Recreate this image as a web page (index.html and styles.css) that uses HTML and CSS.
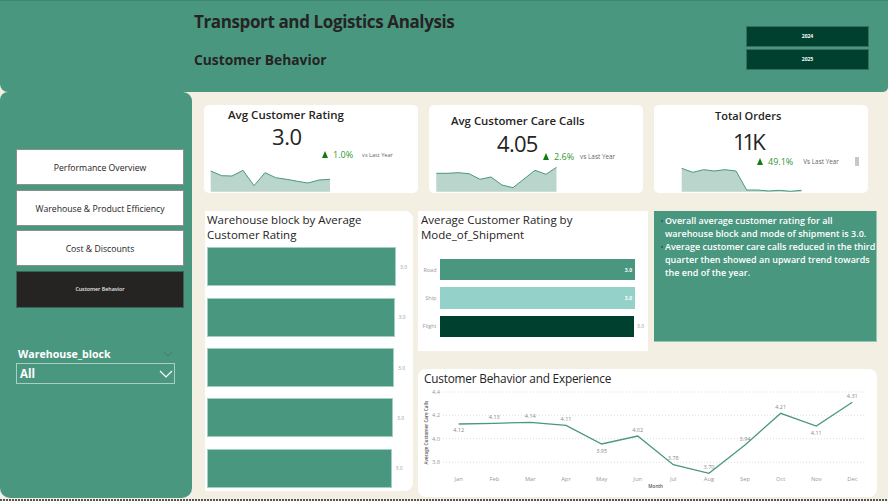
FILE: index.html
```html
<!DOCTYPE html>
<html lang="en">

<head>
    <meta charset="UTF-8">
    <title>Transport and Logistics Analysis</title>
    <link rel="stylesheet" href="styles.css">
</head>

<body>
    <div class="header">
        <div class="titles">
            <h1>Transport and Logistics Analysis</h1>
            <h2>Customer Behavior</h2>
        </div>
        <div class="years">
            <div class="year">2024</div>
            <div class="year">2025</div>
        </div>
    </div>

    <div class="content">
        <div class="sidebar">
            <div class="nav">
                <div class="nav-btn">Performance Overview</div>
                <div class="nav-btn">Warehouse &amp; Product Efficiency</div>
                <div class="nav-btn">Cost &amp; Discounts</div>
                <div class="nav-btn active">Customer Behavior</div>
            </div>
            <div class="slicer">
                <div class="slicer-head">
                    <span>Warehouse_block</span>
                    <svg width="10" height="6" viewBox="0 0 10 6"><path d="M1 1l4 4 4-4" fill="none" stroke="#3f7f6c" stroke-width="1"/></svg>
                </div>
                <div class="slicer-box">
                    <span>All</span>
                    <svg width="14" height="8" viewBox="0 0 14 8"><path d="M1 1l6 6 6-6" fill="none" stroke="#fff" stroke-width="1.2"/></svg>
                </div>
            </div>
        </div>

        <div class="main">
            <div class="kpis">
                <div class="kpi kpi-one">
                    <div class="kpi-title">Avg Customer Rating</div>
                    <div class="kpi-value">3.0</div>
                    <div class="kpi-change"><span class="tri"></span><span class="pct">1.0%</span><span class="vs">vs Last Year</span></div>
                    <svg class="spark" width="120" height="27" viewBox="210 165 120 27">
                        <path class="area" d="M210.7 171L221.7 175.7 232 176 243 170.3 254 185.7 265 172.7 275.7 177.7 286.7 179.3 297.5 181.3 308 183 319 180 330 179.3V191.7H210.7Z"/>
                        <path class="stroke" d="M210.7 171L221.7 175.7 232 176 243 170.3 254 185.7 265 172.7 275.7 177.7 286.7 179.3 297.5 181.3 308 183 319 180 330 179.3"/>
                    </svg>
                </div>
                <div class="kpi kpi-two">
                    <div class="kpi-title">Avg Customer Care Calls</div>
                    <div class="kpi-value">4.05</div>
                    <div class="kpi-change"><span class="tri"></span><span class="pct">2.6%</span><span class="vs">vs Last Year</span></div>
                    <svg class="spark" width="122" height="27" viewBox="436 165 122 27">
                        <path class="area" d="M436.3 173.3L447 173.3 458 172.7 469 173.7 480 179.3 491 177 502 185 513 187.7 524 179 535 170.3 546 174.3 556.5 167.3V191.7H436.3Z"/>
                        <path class="stroke" d="M436.3 173.3L447 173.3 458 172.7 469 173.7 480 179.3 491 177 502 185 513 187.7 524 179 535 170.3 546 174.3 556.5 167.3"/>
                    </svg>
                </div>
                <div class="kpi kpi-three">
                    <div class="kpi-title">Total Orders</div>
                    <div class="kpi-value">11K</div>
                    <div class="kpi-change"><span class="tri"></span><span class="pct">49.1%</span><span class="vs">Vs Last Year</span></div>
                    <div class="scroll-thumb"></div>
                    <svg class="spark" width="122" height="27" viewBox="681 165 122 27">
                        <path class="area" d="M681.7 168.3L692.7 172.3 703.7 169.7 714 171 725 169.7 736 171 746.7 190 757.7 190 768.5 191 779.5 190.3 790.5 191.3 801.5 190.3V191.7H681.7Z"/>
                        <path class="stroke" d="M681.7 168.3L692.7 172.3 703.7 169.7 714 171 725 169.7 736 171 746.7 190 757.7 190 768.5 191 779.5 190.3 790.5 191.3 801.5 190.3"/>
                    </svg>
                </div>
            </div>

            <div class="lower">
                <div class="card block-card">
                    <div class="card-title">Warehouse block by Average Customer Rating</div>
                    <div class="block-bars">
                        <div class="block-row"><div class="block-bar" style="width: 189px"></div><span class="val">3.0</span></div>
                        <div class="block-row"><div class="block-bar" style="width: 187.5px"></div><span class="val">3.0</span></div>
                        <div class="block-row"><div class="block-bar" style="width: 187px"></div><span class="val">3.0</span></div>
                        <div class="block-row"><div class="block-bar" style="width: 186px"></div><span class="val">3.0</span></div>
                        <div class="block-row"><div class="block-bar" style="width: 184.5px"></div><span class="val">3.0</span></div>
                    </div>
                </div>

                <div class="right-col">
                    <div class="right-top">
                        <div class="card mode-card">
                            <div class="card-title">Average Customer Rating by Mode_of_Shipment</div>
                            <div class="mode-bars">
                                <div class="mode-row"><span class="mode-label">Road</span><div class="mode-bar road"><span>3.0</span></div></div>
                                <div class="mode-row"><span class="mode-label">Ship</span><div class="mode-bar ship"><span>3.0</span></div></div>
                                <div class="mode-row"><span class="mode-label">Flight</span><div class="mode-bar flight"></div><span class="val">3.0</span></div>
                            </div>
                        </div>
                        <div class="notes">
                            <p>Overall average customer rating for all warehouse block and mode of shipment is 3.0.</p>
                            <p>Average customer care calls reduced in the third quarter then showed an upward trend towards the end of the year.</p>
                        </div>
                    </div>

                    <div class="card line-card">
                        <div class="line-title">Customer Behavior and Experience</div>
                        <svg class="line-chart" width="459" height="109" viewBox="418 388 459 109">
                            <g class="grid">
                                <line x1="443" x2="866" y1="392" y2="392"/>
                                <line x1="443" x2="866" y1="415.3" y2="415.3"/>
                                <line x1="443" x2="866" y1="438.7" y2="438.7"/>
                                <line x1="443" x2="866" y1="462.3" y2="462.3"/>
                            </g>
                            <g class="axis">
                                <text x="436" y="394" text-anchor="middle">4.4</text>
                                <text x="436" y="417.3" text-anchor="middle">4.2</text>
                                <text x="436" y="440.7" text-anchor="middle">4.0</text>
                                <text x="436" y="464.3" text-anchor="middle">3.8</text>
                                <text x="458.7" y="481" text-anchor="middle">Jan</text>
                                <text x="494.3" y="481" text-anchor="middle">Feb</text>
                                <text x="530.3" y="481" text-anchor="middle">Mar</text>
                                <text x="566" y="481" text-anchor="middle">Apr</text>
                                <text x="601.7" y="481" text-anchor="middle">May</text>
                                <text x="637.7" y="481" text-anchor="middle">Jun</text>
                                <text x="673.3" y="481" text-anchor="middle">Jul</text>
                                <text x="709" y="481" text-anchor="middle">Aug</text>
                                <text x="745" y="481" text-anchor="middle">Sep</text>
                                <text x="780.7" y="481" text-anchor="middle">Oct</text>
                                <text x="816.3" y="481" text-anchor="middle">Nov</text>
                                <text x="852.3" y="481" text-anchor="middle">Dec</text>
                            </g>
                            <text class="axis-name" x="655.7" y="488" text-anchor="middle">Month</text>
                            <text class="axis-name" transform="translate(427.5 432.7) rotate(-90)" text-anchor="middle">Average Customer Care Calls</text>
                            <path class="trend" d="M458.7 424L494.3 423.3 530.3 422.3 566 425.3 601.7 444 637.7 436 673.3 464.7 709 473.3 745 445 780.7 413.3 816.3 426 852.3 402.3"/>
                            <g class="points">
                                <text x="458.7" y="432">4.12</text>
                                <text x="494.3" y="419">4.13</text>
                                <text x="530.3" y="417.5">4.14</text>
                                <text x="566" y="421">4.11</text>
                                <text x="601.7" y="453">3.95</text>
                                <text x="637.7" y="432">4.02</text>
                                <text x="673.3" y="460">3.78</text>
                                <text x="709" y="469">3.70</text>
                                <text x="745" y="441">3.94</text>
                                <text x="780.7" y="409">4.21</text>
                                <text x="816.3" y="435">4.11</text>
                                <text x="852.3" y="398">4.31</text>
                            </g>
                        </svg>
                    </div>
                </div>
            </div>
        </div>
    </div>

    <div class="page-end"></div>
</body>

</html>
```

FILE: styles.css
```css
* {
    box-sizing: border-box;
}

html,
body {
    margin: 0;
    height: 502px;
    overflow: hidden;
}

body {
    font-family: "Open Sans", "Noto Sans", sans-serif;
    background-color: #f3efe2;
    color: #252423;
}

/* header */
.header {
    display: flex;
    justify-content: space-between;
    height: 92px;
    padding: 0 19px 0 194px;
    background-color: #4a9780;
    border-top: 1px solid #3f8570;
    border-radius: 0 0 5px 8px;
}

.titles h1 {
    margin: 10px 0 0;
    font-size: 17px;
    line-height: 22px;
    font-weight: 700;
    letter-spacing: -0.38px;
}

.titles h2 {
    margin: 17px 0 0;
    font-size: 13.8px;
    line-height: 20px;
    font-weight: 700;
}

.years {
    display: flex;
    flex-direction: column;
    gap: 2px;
    width: 123px;
    padding-top: 25px;
}

.year {
    height: 21px;
    line-height: 19px;
    text-align: center;
    font-size: 5px;
    font-weight: 700;
    color: #fff;
    background-color: #00402f;
    border: 1px solid #3b6b5e;
}

/* sidebar + main */
.content {
    display: flex;
    height: 406px;
}

.sidebar {
    width: 192px;
    flex-shrink: 0;
    padding: 57px 8px 0 16px;
    background-color: #4a9780;
    border-radius: 8px 9px 10px 10px;
}

.nav {
    display: flex;
    flex-direction: column;
    gap: 4.7px;
    width: 168px;
}

.nav-btn {
    height: 36px;
    line-height: 36px;
    text-align: center;
    font-size: 8.7px;
    background-color: #fff;
    border: 1px solid #8f8f8f;
}

.nav-btn.active {
    height: 37px;
    line-height: 35px;
    font-size: 5.3px;
    font-weight: 600;
    color: #e8e8e8;
    background-color: #252423;
    border-color: #3a6458;
}

.slicer {
    width: 159px;
    margin-top: 38px;
    color: #fff;
    font-weight: 700;
}

.slicer-head {
    display: flex;
    justify-content: space-between;
    align-items: center;
    height: 15px;
    padding: 0 2px;
    font-size: 10.6px;
}

.slicer-box {
    display: flex;
    justify-content: space-between;
    align-items: center;
    height: 21px;
    margin-top: 2px;
    padding: 0 1px 0 3px;
    font-size: 11.5px;
    border: 1px solid #a9cfc3;
}

.main {
    flex-grow: 1;
    padding: 13px 11px 0 12px;
}

/* kpi cards */
.kpis {
    display: flex;
    gap: 11px;
}

.kpi {
    position: relative;
    width: 214px;
    height: 88px;
    background-color: #fff;
    border-radius: 5px;
}

.kpi-title {
    position: absolute;
    font-size: 11.5px;
    font-weight: 600;
    white-space: nowrap;
}

.kpi-value {
    position: absolute;
    font-size: 22px;
    line-height: 30px;
}

.kpi-change {
    position: absolute;
    display: flex;
    align-items: center;
    white-space: nowrap;
}

.tri {
    width: 0;
    height: 0;
    border-left: 3.6px solid transparent;
    border-right: 3.6px solid transparent;
    border-bottom: 7px solid #107c10;
}

.pct {
    margin-left: 5px;
    font-size: 9px;
    color: #2f9a2f;
}

.vs {
    margin-left: 9px;
    font-size: 5.6px;
    color: #666;
}

.kpi-one .kpi-title { left: 24px; top: 2px; }
.kpi-one .kpi-value { left: 68px; top: 16px; letter-spacing: -0.4px; }
.kpi-one .kpi-change { left: 118px; top: 43px; }

.kpi-two .kpi-title { left: 22px; top: 8px; font-size: 11.4px; }
.kpi-two .kpi-value { left: 68px; top: 23px; letter-spacing: -0.7px; }
.kpi-two .kpi-change { left: 114px; top: 45px; }
.kpi-two .vs { font-size: 6.4px; margin-left: 6px; }

.kpi-three .kpi-title { left: 61px; top: 3px; font-size: 11px; }
.kpi-three .kpi-value { left: 79px; top: 21px; letter-spacing: -3px; }
.kpi-three .kpi-change { left: 103px; top: 50px; }
.kpi-three .vs { font-size: 6.4px; margin-left: 10px; }

.scroll-thumb {
    position: absolute;
    left: 201px;
    top: 52px;
    width: 4px;
    height: 9px;
    background-color: #c8c8c8;
}

.spark {
    position: absolute;
    bottom: 1px;
    display: block;
}

.kpi-one .spark { left: 6px; }
.kpi-two .spark { left: 7px; }
.kpi-three .spark { left: 27px; }

.spark .area {
    fill: #b9d5cc;
}

.spark .stroke {
    fill: none;
    stroke: #4a9780;
    stroke-width: 1;
}

/* lower charts */
.lower {
    display: flex;
    gap: 5px;
    margin-top: 18px;
    margin-left: 1px;
}

.card {
    background-color: #fff;
}

.card-title {
    font-size: 11.5px;
    line-height: 15px;
}

.block-card {
    width: 208px;
    height: 280px;
    padding: 1px 2px 0 2px;
    border-radius: 0 8px 8px 0;
}

.block-card .card-title {
    margin-bottom: 5.3px;
    padding-right: 20px;
}

.block-bars {
    display: flex;
    flex-direction: column;
    gap: 11.4px;
}

.block-row {
    display: flex;
    align-items: center;
    gap: 4px;
    height: 39px;
}

.block-bar {
    height: 39px;
    background-color: #4a9780;
    border: 1px solid #a3d0c4;
}

.val {
    font-size: 5px;
    color: #999;
}

.right-col {
    display: flex;
    flex-direction: column;
    width: 459px;
}

.right-top {
    display: flex;
    gap: 6px;
}

.mode-card {
    width: 230px;
    height: 140px;
    padding: 1px 0 0 3px;
}

.mode-bars {
    display: flex;
    flex-direction: column;
    gap: 7px;
    margin-top: 17px;
}

.mode-row {
    display: flex;
    align-items: center;
    height: 21.3px;
}

.mode-label {
    width: 15.5px;
    text-align: right;
    font-size: 5.5px;
    color: #999;
}

.mode-bar {
    display: flex;
    align-items: center;
    justify-content: flex-end;
    width: 195px;
    height: 21.3px;
    margin-left: 3.5px;
    padding-right: 3px;
    font-size: 5px;
    font-weight: 700;
    color: #fff;
}

.mode-bar.road { background-color: #4a9780; }
.mode-bar.ship { background-color: #94d1c8; }
.mode-bar.flight { background-color: #00402f; width: 194px; margin-right: 3px; }

.notes {
    width: 223px;
    height: 131px;
    padding: 3px 0 0 7px;
    color: #fff;
    font-size: 9px;
    font-weight: 600;
    line-height: 13px;
    background-color: #4a9780;
    border-right: 1px solid #8fc7b8;
    border-bottom: 1px solid #8fc7b8;
}

.notes p {
    display: flex;
    margin: 0;
}

.notes p::before {
    content: "";
    flex-shrink: 0;
    width: 2px;
    height: 2px;
    margin: 6px 2px 0 0;
    background-color: #2f6b59;
}

.line-card {
    height: 128px;
    margin-top: 18px;
    border-radius: 8px;
}

.line-title {
    height: 19px;
    padding: 1px 0 0 6px;
    font-size: 11.8px;
    line-height: 17px;
    font-weight: 500;
    letter-spacing: -0.2px;
}

.line-chart {
    display: block;
}

.grid line {
    stroke: #c8c8c8;
    stroke-width: 0.6;
    stroke-dasharray: 1 2;
}

.axis text {
    font-size: 5.8px;
    fill: #999;
}

.axis-name {
    font-size: 4.6px;
    font-weight: 600;
    fill: #555;
}

.trend {
    fill: none;
    stroke: #4a9780;
    stroke-width: 1.3;
}

.points text {
    font-size: 5.5px;
    fill: #888;
    text-anchor: middle;
}

.page-end {
    height: 3px;
    margin-top: 1px;
    background: repeating-linear-gradient(90deg, #555 0 2px, transparent 2px 3px);
    border-bottom: 1px solid #fff;
    background-clip: padding-box;
}
```
